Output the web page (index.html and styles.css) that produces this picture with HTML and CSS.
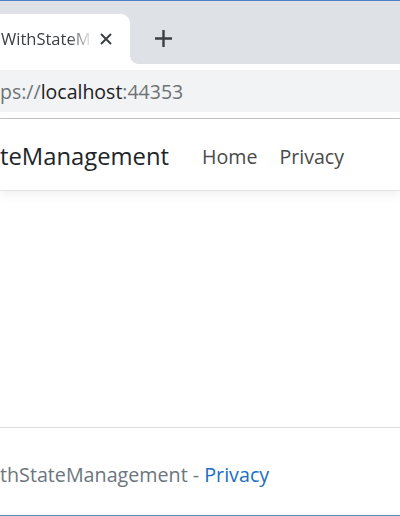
FILE: index.html
```html
<!DOCTYPE html>
<html>
<head>
<meta charset="utf-8">
<link rel="stylesheet" href="styles.css">
</head>
<body>
<div class="window">
  <div class="topline"></div>
  <div class="tabstrip">
    <div class="tab">
      <span class="tab-title">WithStateM</span>
      <svg class="tab-close" width="12" height="12" viewBox="0 0 12 12"><path d="M1 1L11 11M11 1L1 11" stroke="#3c4043" stroke-width="2" fill="none"/></svg>
      <span class="tab-foot"></span>
    </div>
    <svg class="newtab" width="17" height="17" viewBox="0 0 17 17"><path d="M8.5 0V17M0 8.5H17" stroke="#3c4043" stroke-width="2.4" fill="none"/></svg>
  </div>
  <div class="toolbar">
    <div class="omnibox"><span class="url-dim">ps://</span><span class="url-host">localhost</span><span class="url-dim">:44353</span></div>
  </div>
  <div class="page">
    <header class="navbar">
      <span class="brand">teManagement</span>
      <nav class="nav">
        <a class="nav-link">Home</a>
        <a class="nav-link">Privacy</a>
      </nav>
    </header>
    <main class="main"></main>
    <footer class="footer">
      <span>thStateManagement - <a class="footer-link">Privacy</a></span>
    </footer>
  </div>
  <div class="bottomline"></div>
</div>
</body>
</html>
```
FILE: styles.css
```css
html, body {
  margin: 0;
  padding: 0;
}
body {
  width: 400px;
  height: 516px;
  overflow: hidden;
  background: #ffffff;
  font-family: "Open Sans", "Noto Sans", sans-serif;
}
.window {
  display: flex;
  flex-direction: column;
  height: 516px;
}
.topline {
  height: 1px;
  background: #4a80c4;
  flex: none;
}
.tabstrip {
  height: 63px;
  background: #dee1e6;
  display: flex;
  align-items: flex-end;
  flex: none;
}
.tab {
  position: relative;
  width: 130px;
  height: 50px;
  background: #ffffff;
  border-top-right-radius: 9px;
  display: flex;
  align-items: center;
  padding-bottom: 1px;
  box-sizing: border-box;
}
.tab-foot {
  position: absolute;
  right: -8px;
  bottom: 0;
  width: 8px;
  height: 8px;
  background: radial-gradient(circle at 100% 0, transparent 7.5px, #ffffff 8px);
}
.tab-title {
  width: 92px;
  margin-left: 1px;
  white-space: nowrap;
  font-size: 16.5px;
  color: #3c4043;
  -webkit-mask-image: linear-gradient(to right, #000 68px, transparent 92px);
  mask-image: linear-gradient(to right, #000 68px, transparent 92px);
}
.tab-close {
  margin-left: 7px;
}
.newtab {
  margin-left: 25px;
  margin-bottom: 17px;
}
.toolbar {
  background: #ffffff;
  border-bottom: 1px solid #c4c4c4;
  display: flex;
  align-items: center;
  flex: none;
  box-sizing: border-box;
  height: 55px;
}
.omnibox {
  flex: 1;
  height: 42px;
  background: #f1f3f4;
  display: flex;
  align-items: center;
  font-size: 19.5px;
  white-space: nowrap;
}
.url-dim {
  color: #6e7276;
}
.url-host {
  color: #202124;
}
.page {
  flex: 1;
  display: flex;
  flex-direction: column;
}
.navbar {
  height: 72px;
  box-sizing: border-box;
  border-bottom: 1px solid #e3e3e3;
  box-shadow: 0 4px 10px rgba(0, 0, 0, 0.06);
  display: flex;
  align-items: center;
  padding-top: 3px;
}
.brand {
  font-size: 23.8px;
  color: #212529;
  margin-right: 33px;
}
.nav {
  display: flex;
  gap: 22px;
}
.nav-link {
  font-size: 19.6px;
  color: #4a4a4a;
}
.main {
  flex: 1;
}
.footer {
  height: 88px;
  border-top: 1px solid #dcdcdc;
  box-sizing: border-box;
  display: flex;
  align-items: center;
  font-size: 19.7px;
  color: #6c757d;
  padding-top: 5px;
}
.footer-link {
  color: #1b6ec2;
}
.bottomline {
  height: 1px;
  background: #5a8fb8;
  flex: none;
}
```
